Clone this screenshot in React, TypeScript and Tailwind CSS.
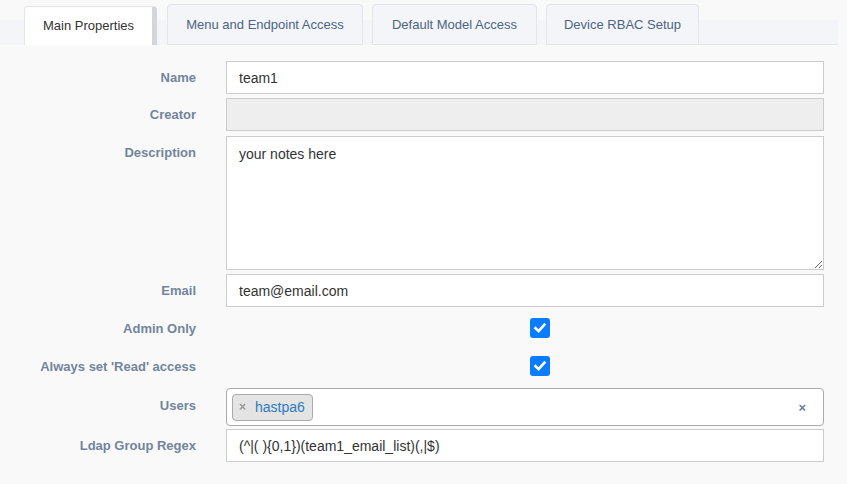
import React from "react";

function Label({ children, center, pt }: { children: React.ReactNode; center?: boolean; pt?: string }) {
  return (
    <div
      className={
        "w-[196px] shrink-0 text-right text-[13px] leading-[15px] font-bold text-[#71859c] " +
        (center ? "self-center" : pt ? pt : "pt-[9px]")
      }
    >
      {children}
    </div>
  );
}

function Check() {
  return (
    <div className="ml-[304px] w-[20px] h-[20px] rounded-[3px] bg-[#0a7cff] flex items-center justify-center">
      <svg width="14" height="14" viewBox="0 0 14 14">
        <path d="M2.5 7.2 L5.6 10.2 L11.5 3.6" fill="none" stroke="white" strokeWidth="2.6" strokeLinecap="square" />
      </svg>
    </div>
  );
}

const inputBase =
  "w-[598px] h-[33px] border border-[#cccccc] px-[12px] text-[14px] text-[#333] outline-none font-['Liberation_Sans',sans-serif]";

export default function App() {
  return (
    <div className="w-[847px] h-[484px] bg-[#f9f9f9] font-['Liberation_Sans',Arial,sans-serif] overflow-hidden">
      {/* Tabs */}
      <div className="h-[45px] flex items-end pl-[24px] w-[838px] bg-[linear-gradient(to_bottom,transparent_20px,#f3f5f8_20px)]">
        <div className="w-[133px] h-[39px] bg-white border border-[#e4e6ea] border-b-0 border-r-[5px] border-r-[#d3d6db] rounded-t-[4px] flex items-center justify-center text-[13px] text-[#333]">
          Main Properties
        </div>
        <div className="ml-[10px] w-[196px] h-[41px] bg-[#f3f5f8] border border-[#e1e4e8] rounded-t-[4px] flex items-center justify-center text-[13px] text-[#4d6482]">
          Menu and Endpoint Access
        </div>
        <div className="ml-[9px] w-[165px] h-[41px] bg-[#f3f5f8] border border-[#e1e4e8] rounded-t-[4px] flex items-center justify-center text-[13px] text-[#4d6482]">
          Default Model Access
        </div>
        <div className="ml-[9px] w-[153px] h-[41px] bg-[#f3f5f8] border border-[#e1e4e8] rounded-t-[4px] flex items-center justify-center text-[13px] text-[#4d6482]">
          Device RBAC Setup
        </div>
        <div className="flex-1 h-[25px] border-b border-[#e1e4e8]" />
      </div>

      {/* Form */}
      <div className="flex flex-col">
        <div className="mt-[16px] flex gap-[30px]">
          <Label>Name</Label>
          <input readOnly value="team1" className={inputBase + " bg-white"} />
        </div>
        <div className="mt-[4px] flex gap-[30px]">
          <Label>Creator</Label>
          <input readOnly value="" className={inputBase + " bg-[#eeeeee]"} />
        </div>
        <div className="mt-[5px] flex gap-[30px]">
          <Label>Description</Label>
          <textarea
            readOnly
            value="your notes here"
            className="w-[598px] h-[134px] border border-[#cccccc] bg-white px-[12px] py-[8px] text-[14px] leading-[18px] text-[#333] outline-none resize-y font-['Liberation_Sans',sans-serif] block"
          />
        </div>
        <div className="mt-[4px] flex gap-[30px]">
          <Label>Email</Label>
          <input readOnly value="team@email.com" className={inputBase + " bg-white"} />
        </div>
        <div className="mt-[4px] h-[34px] flex items-center gap-[30px]">
          <Label center>Admin Only</Label>
          <Check />
        </div>
        <div className="mt-[4px] h-[34px] flex items-center gap-[30px]">
          <Label center>Always set 'Read' access</Label>
          <Check />
        </div>
        <div className="mt-[5px] flex gap-[30px]">
          <Label pt="pt-[10px]">Users</Label>
          <div className="w-[598px] h-[38px] border border-[#aaaaaa] rounded-[4px] bg-white flex items-center pl-[5px] pr-[17px]">
            <div className="h-[27px] w-[81px] border border-[#aaaaaa] rounded-[4px] bg-[#e4e4e4] flex items-center pl-[6px]">
              <span className="text-[12px] font-bold text-[#999] leading-none">×</span>
              <span className="ml-[9px] text-[14px] text-[#2f7bbf]">hastpa6</span>
            </div>
            <div className="flex-1" />
            <span className="text-[13px] font-bold text-[#6b7c93] leading-none">×</span>
          </div>
        </div>
        <div className="mt-[3px] flex gap-[30px]">
          <Label>Ldap Group Regex</Label>
          <input readOnly value="(^|( ){0,1})(team1_email_list)(,|$)" className={inputBase + " bg-white"} />
        </div>
      </div>
    </div>
  );
}
